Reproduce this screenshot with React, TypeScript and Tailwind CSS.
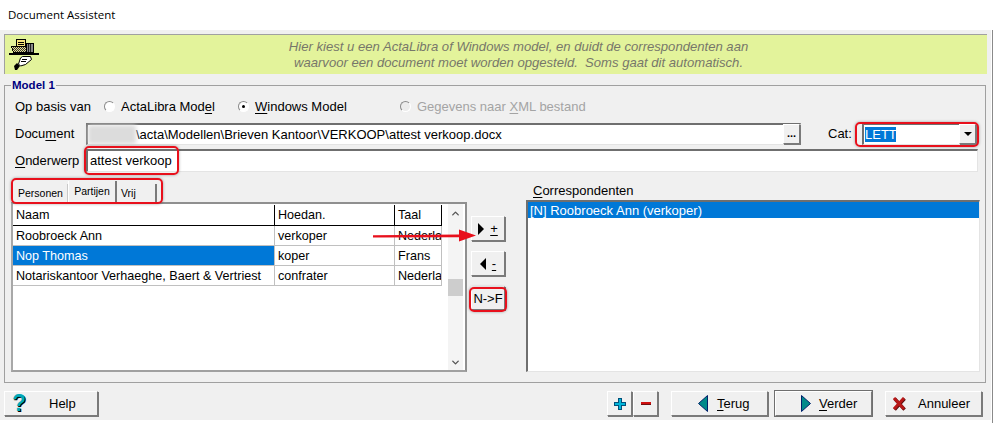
import { ReactNode } from "react";
import { ChevronUp, ChevronDown } from "lucide-react";

const ui = "font-['Liberation_Sans',sans-serif]";

// classic raised win32 button
const raised = "border border-t-white border-l-white border-r-[#7a7a7a] border-b-[#7a7a7a] shadow-[1px_1px_0_#7a7a7a] bg-[#f0f0f0]";
const sunken = "border-t-2 border-l-2 border-t-[#6f6f6f] border-l-[#6f6f6f] border-r border-b border-r-[#e4e4e4] border-b-[#e4e4e4] bg-white";

function U({ children }: { children: ReactNode }) {
    return <span className="underline underline-offset-2">{children}</span>;
}

function Radio({ checked, disabled }: { checked?: boolean; disabled?: boolean }) {
    return (
        <span className={`w-[11px] h-[11px] rounded-full border border-t-[#8a8a8a] border-l-[#8a8a8a] border-r-white border-b-white flex items-center justify-center ${disabled ? "bg-[#ececec]" : "bg-white"}`}>
            {checked && <span className="w-[3px] h-[3px] rounded-full bg-black" />}
        </span>
    );
}

function Btn({ className, children }: { className: string; children: ReactNode }) {
    return <div className={`${raised} flex items-center shrink-0 ${className}`}>{children}</div>;
}

function RedBox({ className }: { className: string }) {
    return <div className={`absolute border-2 border-[#e8101c] rounded-[5px] shadow-[0_0_3px_rgba(0,0,0,0.35)] pointer-events-none ${className}`} />;
}

function TrayIcon() {
    return (
        <svg width="30" height="31" viewBox="0 0 30 31" shapeRendering="crispEdges">
            <defs>
                <pattern id="dither" width="2" height="2" patternUnits="userSpaceOnUse">
                    <rect width="2" height="2" fill="#e8e090" />
                    <rect width="1" height="1" fill="#333" />
                    <rect x="1" y="1" width="1" height="1" fill="#333" />
                </pattern>
            </defs>
            <rect x="7.5" y="0.5" width="9" height="8" fill="#f5e47c" stroke="#000" />
            <path d="M9 3h6M9 5h6" stroke="#000" />
            <path d="M2.5 7.5h15v6h-13z" fill="url(#dither)" stroke="#000" />
            <rect x="17.5" y="4.5" width="7" height="9" fill="#888" stroke="#000" />
            <path d="M19.5 5v8M21.5 5v8" stroke="#222" />
            <rect x="0" y="14" width="30" height="2" fill="#000" />
            <path d="M21.5 17.5l1 3-6 5-5 1.5-2-2 2-6 2-1.5z" fill="#fff" stroke="#000" shapeRendering="auto" />
            <path d="M13 20l5 0M12 22l5 0" stroke="#000" />
            <path d="M5 27l3-3 3 3-3 4h-2z" fill="#000" shapeRendering="auto" />
        </svg>
    );
}

function PlusIcon() {
    return (
        <svg width="13" height="13" viewBox="0 0 13 13" shapeRendering="crispEdges">
            <path d="M5 1h3v4h4v3H8v4H5V8H1V5h4z" fill="#00b4d8" stroke="#00507a" />
        </svg>
    );
}

function TriangleIcon({ left }: { left?: boolean }) {
    return (
        <svg width="10" height="17" viewBox="0 0 10 17">
            <path d={left ? "M9.5 0.5v16L0.5 8.5z" : "M0.5 0.5v16l9-8z"} fill="#008a8a" stroke="#00206a" />
        </svg>
    );
}

function CrossIcon() {
    return (
        <svg width="14" height="15" viewBox="0 0 14 15">
            <path d="M2 2l10 11M12 2L2 13" stroke="#5a1010" strokeWidth="3.4" transform="translate(0.6 0.6)" />
            <path d="M2 2l10 11M12 2L2 13" stroke="#b81818" strokeWidth="3" />
        </svg>
    );
}

const rows = [
    { naam: "Roobroeck Ann", hoe: "verkoper", taal: "Nederlands" },
    { naam: "Nop Thomas", hoe: "koper", taal: "Frans", selected: true },
    { naam: "Notariskantoor Verhaeghe, Baert & Vertriest", hoe: "confrater", taal: "Nederlands" },
];

export default function App() {
    return (
        <div className={`${ui} relative w-[993px] h-[423px] overflow-hidden bg-white text-[13px] leading-none text-black`}>
            {/* Title */}
            <div className="h-[30px] flex items-center pl-2 text-[11.5px] font-['Open_Sans',sans-serif]">Document Assistent</div>

            <div className="flex">
                <div className="w-[991px] h-[390px] bg-[#f0f0f0] pl-1 pr-[5px] pt-1 flex flex-col shrink-0">
                    {/* Banner */}
                    <div className="h-10 shrink-0 bg-[#e3f39b] border-t border-l border-t-[#a0a0a0] border-l-[#a0a0a0] flex items-center pl-[4px] -mr-[1px]">
                        <TrayIcon />
                        <div className="flex-1 text-center italic text-[13.1px] leading-[16px] text-[#77776a] pl-[11px]">
                            <div>Hier kiest u een ActaLibra of Windows model, en duidt de correspondenten aan</div>
                            <div>waarvoor een document moet worden opgesteld.&nbsp; Soms gaat dit automatisch.</div>
                        </div>
                    </div>

                    {/* Model group */}
                    <div className="relative mt-[11px] h-[298px] shrink-0 border border-[#a0a0a0] pl-[10px] pr-[6px] pt-[12px] flex flex-col">
                        <div className="absolute -top-[6px] left-[6px] bg-[#f0f0f0] px-[1px] text-[11.5px] font-bold text-[#00007f]">Model 1</div>

                        <div className="h-[17px] flex items-center">
                            <span className="w-[89px]">Op basis van</span>
                            <Radio />
                            <span className="ml-[6px] w-[117px]">ActaLibra Mod<U>e</U>l</span>
                            <Radio checked />
                            <span className="ml-[6px] w-[145px]"><U>W</U>indows Model</span>
                            <Radio disabled />
                            <span className="ml-[6px] text-[#a4a4a4]">Gegevens naar <U>X</U>ML bestand</span>
                        </div>

                        <div className="mt-[7px] h-[23px] flex items-center">
                            <span className="w-[71px]">Docu<U>m</U>ent</span>
                            <div className={`${sunken} w-[715px] h-[22px] flex items-center`}>
                                <div className="w-[48px] h-full bg-[#dcdcdc] blur-[2px] shrink-0" />
                                <span className="flex-1">\acta\Modellen\Brieven Kantoor\VERKOOP\attest verkoop.docx</span>
                                <Btn className="w-[17px] h-[20px] justify-center font-bold text-[11px] -mt-[1px]">...</Btn>
                            </div>
                            <span className="ml-[27px] w-[34px]">Cat:</span>
                            <div className={`${sunken} w-[115px] h-[22px] flex items-center`}>
                                <span className="ml-[1px] bg-[#0078d7] text-white h-[15px] leading-[15px] w-[31px]">LETT</span>
                                <Btn className="ml-auto w-[17px] h-[20px] justify-center -mt-[1px]">
                                    <span className="border-x-[4px] border-x-transparent border-t-[4px] border-t-black" />
                                </Btn>
                            </div>
                        </div>

                        <div className="mt-[4px] h-[23px] flex items-center">
                            <span className="w-[71px]"><U>O</U>nderwerp</span>
                            <div className={`${sunken} w-[892px] h-[23px] flex items-center pl-[2px] pb-[2px]`}>attest verkoop</div>
                        </div>

                        <div className="flex mt-[9px] gap-[4px]">
                            {/* Left side: tabs + grid */}
                            <div className="w-[456px] -ml-[4px] flex flex-col shrink-0">
                                <div className="h-[21px] flex items-end pl-[3px] text-[10.5px]">
                                    <div className="w-[54px] h-[18px] flex items-center justify-center border-r border-[#c8c8c8]">Personen</div>
                                    <div className="w-[49px] h-[21px] flex items-center justify-center border-l border-white border-r-2 border-r-[#7a7a7a]">Partijen</div>
                                    <div className="w-[40px] h-[18px] flex items-center pl-[4px] border-r-2 border-[#7a7a7a]">Vrij</div>
                                </div>
                                <div className="h-[170px] border-t-2 border-l-2 border-t-[#8f8f8f] border-l-[#a8a8a8] border-r-2 border-b-2 border-r-[#8f8f8f] border-b-[#a0a0a0] flex bg-white text-[12.6px]">
                                    <div className="w-[429px] shrink-0">
                                        <div className="h-[21px] flex bg-white border-b border-b-black mt-[1px]">
                                            <div className="w-[262px] pl-[3px] flex items-center border-r border-r-black">Naam</div>
                                            <div className="w-[120px] pl-[3px] flex items-center border-r border-r-black">Hoedan.</div>
                                            <div className="flex-1 pl-[3px] flex items-center border-r border-r-black">Taal</div>
                                        </div>
                                        {rows.map((r) => (
                                            <div key={r.naam} className="h-[20px] flex border-b border-b-[#c0c0c0]">
                                                <div className={`w-[262px] pl-[3px] pt-[1px] flex items-center border-r border-r-[#c0c0c0] ${r.selected ? "bg-[#0078d7] text-white" : ""}`}>{r.naam}</div>
                                                <div className="w-[120px] pl-[3px] pt-[1px] flex items-center border-r border-r-[#c0c0c0]">{r.hoe}</div>
                                                <div className="flex-1 pl-[3px] pt-[1px] flex items-center overflow-hidden whitespace-nowrap border-r border-r-[#c0c0c0]">{r.taal}</div>
                                            </div>
                                        ))}
                                    </div>
                                    <div className="ml-[6px] w-[15px] flex flex-col items-center bg-[#f4f4f4]">
                                        <ChevronUp className="w-[11px] h-[11px] mt-[4px] text-[#555]" strokeWidth={3} />
                                        <div className="w-full h-[17px] bg-[#cdcdcd] mt-[60px]" />
                                        <ChevronDown className="w-[11px] h-[11px] mt-auto mb-[2px] text-[#555]" strokeWidth={3} />
                                    </div>
                                </div>
                            </div>

                            {/* Transfer buttons */}
                            <div className="w-[36px] pt-[35px] flex flex-col gap-[10px] shrink-0">
                                <Btn className="w-[34px] h-[25px] justify-center gap-[6px]">
                                    <span className="border-y-[6px] border-y-transparent border-l-[6px] border-l-black" />
                                    <span className="underline underline-offset-2">+</span>
                                </Btn>
                                <Btn className="w-[34px] h-[25px] justify-center gap-[6px]">
                                    <span className="border-y-[6px] border-y-transparent border-r-[6px] border-r-black" />
                                    <span className="underline underline-offset-2">-</span>
                                </Btn>
                                <Btn className="w-[34px] h-[24px] justify-center">N-&gt;F</Btn>
                            </div>

                            {/* Correspondenten */}
                            <div className="ml-[15px] w-[454px] flex flex-col shrink-0">
                                <div className="h-[19px] pl-[7px] flex items-center"><U>C</U>orrespondenten</div>
                                <div className={`${sunken} h-[172px]`}>
                                    <div className="h-[16px] bg-[#0078d7] text-white flex items-center pl-[2px]">[N] Roobroeck Ann (verkoper)</div>
                                </div>
                            </div>
                        </div>
                    </div>

                    {/* Bottom buttons */}
                    <div className="mt-[8px] flex">
                        <Btn className="w-[94px] h-[25px]">
                            <span className="w-[30px] pl-[7px] text-[#00a8b8] font-bold text-[23px] [text-shadow:1px_1px_0_#000]">?</span>
                            <span className="ml-[14px]">Help</span>
                        </Btn>
                        <Btn className="ml-[509px] w-[25px] h-[25px] justify-center"><PlusIcon /></Btn>
                        <Btn className="ml-[1px] w-[25px] h-[25px] justify-center">
                            <span className="w-[10px] h-[3px] bg-[#d01010] border-b border-b-[#701010]" />
                        </Btn>
                        <Btn className="ml-[13px] w-[97px] h-[25px] pl-[26px]">
                            <TriangleIcon left />
                            <span className="ml-[9px]"><U>T</U>erug</span>
                        </Btn>
                        <Btn className="ml-[7px] w-[97px] h-[25px] pl-[25px] outline outline-1 outline-[#6f6f6f]">
                            <TriangleIcon />
                            <span className="ml-[8px]"><U>V</U>erder</span>
                        </Btn>
                        <Btn className="ml-[13px] w-[97px] h-[25px] pl-[6px]">
                            <CrossIcon />
                            <span className="ml-[12px]">Annuleer</span>
                        </Btn>
                    </div>
                </div>
                {/* neighbouring window peeking out on the right */}
                <div className="ml-[1px] w-[1px] h-[393px] bg-[#8a8a8a]" />
            </div>

            {/* window edge at the bottom */}
            <div className="flex h-[1px]">
                <div className="w-[240px] bg-[#6a6a6a]" />
                <div className="w-[751px] bg-[#a8a860]" />
            </div>

            {/* Red annotations */}
            <RedBox className="left-[84px] top-[146px] w-[95px] h-[29px]" />
            <RedBox className="left-[11px] top-[178px] w-[152px] h-[26px]" />
            <RedBox className="left-[855px] top-[122px] w-[124px] h-[25px]" />
            <RedBox className="left-[469px] top-[287px] w-[38px] h-[25px]" />
            <svg className="absolute left-[373px] top-[229px]" width="104" height="14" viewBox="0 0 104 14">
                <path d="M0 6.2L86 5.4V0.5L103 6.5L86 12.5V8.2L0 8.6z" fill="#e8101c" />
            </svg>
        </div>
    );
}
